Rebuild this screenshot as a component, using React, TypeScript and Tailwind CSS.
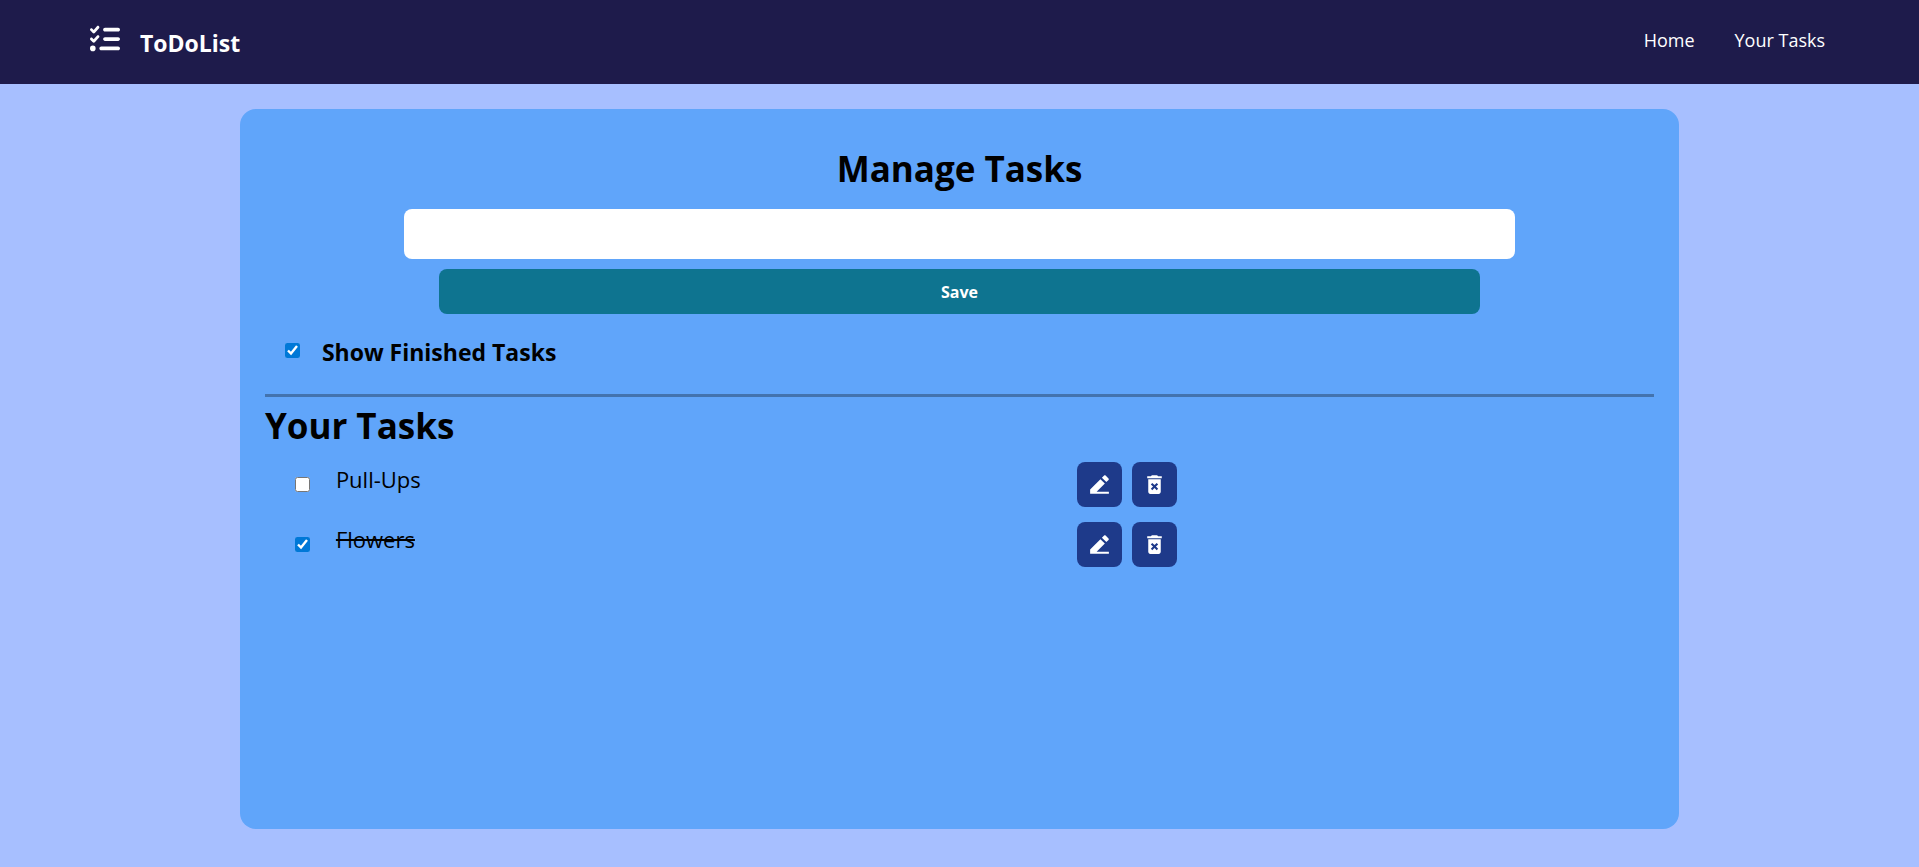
import { useState } from "react";
import type { FormEvent } from "react";
import { FaListCheck } from "react-icons/fa6";
import { MdDeleteForever } from "react-icons/md";
import { RiEdit2Fill } from "react-icons/ri";

type Task = { id: number; text: string; done: boolean };

const initialTasks: Task[] = [
  { id: 1, text: "Pull-Ups", done: false },
  { id: 2, text: "Flowers", done: true },
];

function Navbar() {
  return (
    <header className="flex h-21 items-center justify-between bg-[#1e1b4b] px-[90px] text-white">
      <div className="flex items-center gap-5 pb-[6px]">
        <FaListCheck className="size-[30px]" />
        <span className="pt-2 text-[23px] leading-8 font-bold">ToDoList</span>
      </div>
      <nav className="flex gap-10 pr-1 pb-1 text-lg">
        <a href="#home">Home</a>
        <a href="#tasks">Your Tasks</a>
      </nav>
    </header>
  );
}

function TaskRow({
  task,
  onToggle,
  onEdit,
  onDelete,
}: {
  task: Task;
  onToggle: () => void;
  onEdit: () => void;
  onDelete: () => void;
}) {
  return (
    <li className="flex h-[60px] w-[912px] max-w-full items-start justify-between">
      <div className="flex gap-[26px] pl-[30px]">
        <input
          id={`task-${task.id}`}
          type="checkbox"
          checked={task.done}
          onChange={onToggle}
          className="mt-[15px] size-[15px] accent-[#0078d7]"
        />
        <label
          htmlFor={`task-${task.id}`}
          className={task.done ? "text-[22px] leading-[34px] line-through" : "text-[22px] leading-[34px]"}
        >
          {task.text}
        </label>
      </div>
      <div className="flex gap-[10px]">
        <button
          type="button"
          aria-label="Edit"
          onClick={onEdit}
          className="flex size-[45px] items-center justify-center rounded-lg bg-[#1e3a8a] text-white"
        >
          <RiEdit2Fill className="size-[25px]" />
        </button>
        <button
          type="button"
          aria-label="Delete"
          onClick={onDelete}
          className="flex size-[45px] items-center justify-center rounded-lg bg-[#1e3a8a] text-white"
        >
          <MdDeleteForever className="size-[25px]" />
        </button>
      </div>
    </li>
  );
}

export default function App() {
  const [tasks, setTasks] = useState<Task[]>(initialTasks);
  const [draft, setDraft] = useState("");
  const [showFinished, setShowFinished] = useState(true);

  const remove = (id: number) => setTasks(tasks.filter((t) => t.id !== id));

  const save = (event: FormEvent) => {
    event.preventDefault();
    if (!draft.trim()) return;
    setTasks([...tasks, { id: Date.now(), text: draft.trim(), done: false }]);
    setDraft("");
  };

  return (
    <div className="min-h-screen bg-[#a7bfff] font-['Open_Sans','Noto_Sans',sans-serif] text-black">
      <Navbar />
      <main className="mx-auto mt-[25px] min-h-[720px] w-3/4 rounded-2xl bg-[#60a5fa] p-[25px]">
        <form onSubmit={save} className="flex flex-col items-center gap-[10px] pt-[5px]">
          <h1 className="text-[35px] leading-[60px] font-bold">Manage Tasks</h1>
          <input
            type="text"
            aria-label="New task"
            value={draft}
            onChange={(e) => setDraft(e.target.value)}
            className="h-[50px] w-4/5 rounded-lg bg-white px-5"
          />
          <button
            type="submit"
            className="h-[45px] w-3/4 rounded-lg bg-[#0e7490] text-base font-bold text-white"
          >
            Save
          </button>
        </form>
        <div className="mt-[18px] flex h-10 items-center gap-[22px] pl-5">
          <input
            id="show-finished"
            type="checkbox"
            checked={showFinished}
            onChange={() => setShowFinished(!showFinished)}
            className="mb-1 size-[15px] accent-[#0078d7]"
          />
          <label htmlFor="show-finished" className="text-[23px] leading-8 font-bold">
            Show Finished Tasks
          </label>
        </div>
        <hr className="mt-[22px] h-[3px] border-0 bg-black/30" />
        <h2 className="mt-[6px] mb-[14px] text-[35px] leading-[45px] font-bold">Your Tasks</h2>
        <ul>
          {tasks
            .filter((t) => showFinished || !t.done)
            .map((t) => (
              <TaskRow
                key={t.id}
                task={t}
                onToggle={() =>
                  setTasks(tasks.map((o) => (o.id === t.id ? { ...o, done: !o.done } : o)))
                }
                onEdit={() => {
                  setDraft(t.text);
                  remove(t.id);
                }}
                onDelete={() => remove(t.id)}
              />
            ))}
        </ul>
      </main>
    </div>
  );
}
